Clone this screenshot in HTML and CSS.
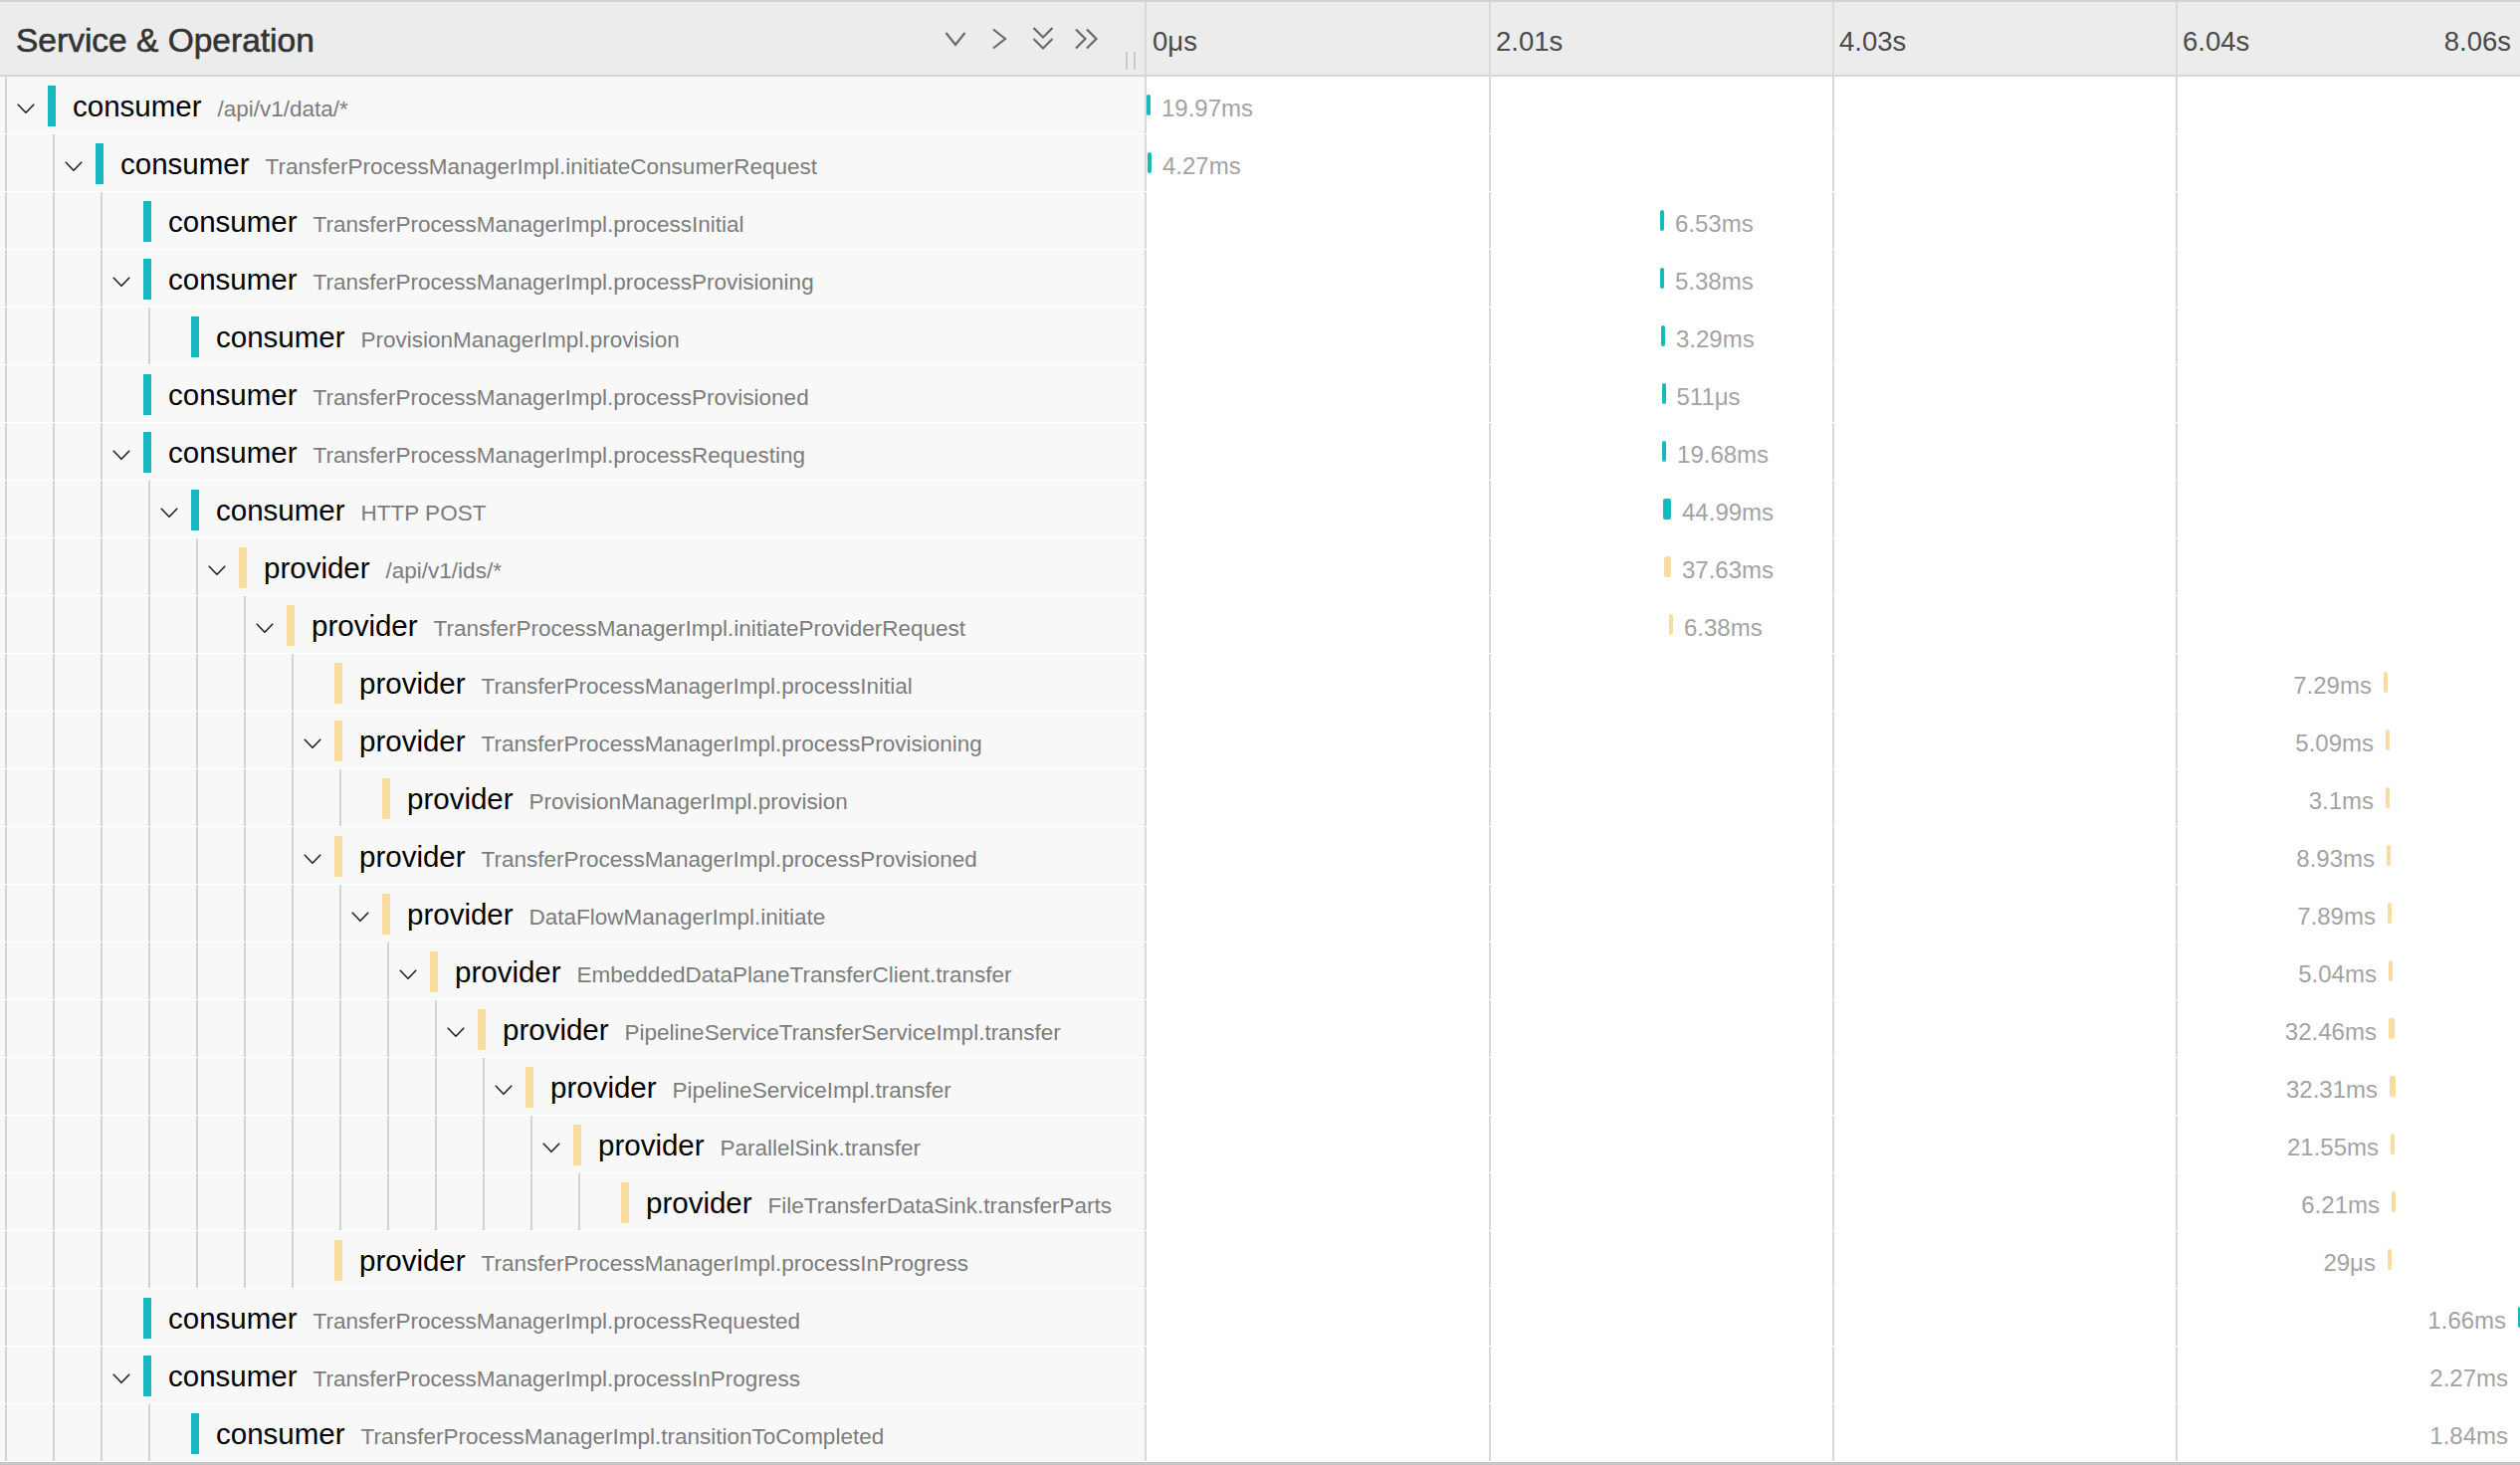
FILE: index.html
```html
<!DOCTYPE html>
<html lang="en">
<head>
<meta charset="utf-8">
<title>Trace timeline</title>
<link rel="stylesheet" href="styles.css">
</head>
<body>
<div class="trace">
  <div class="hdr">
    <div class="hdr-left">
      <span class="title">Service &amp; Operation</span>
      <div class="tools">
        <svg class="ic" viewBox="-14 -14 28 28"><polyline points="-9.5,-6 0,6 9.5,-6"/></svg>
        <svg class="ic" viewBox="-14 -14 28 28"><polyline points="-6,-9.5 6,0 -6,9.5"/></svg>
        <svg class="ic" viewBox="-14 -14 28 28"><polyline points="-9.5,-11 0,-1.5 9.5,-11"/><polyline points="-9.5,0 0,9.5 9.5,0"/></svg>
        <svg class="ic" viewBox="-14 -14 28 28"><polyline points="-11,-9.5 -1.5,0 -11,9.5"/><polyline points="0,-9.5 9.5,0 0,9.5"/></svg>
      </div>
      <span class="grip"></span>
    </div>
    <div class="hdr-ticks ticks">
      <span class="tick">0μs</span>
      <span class="tick">2.01s</span>
      <span class="tick">4.03s</span>
      <span class="tick last"><span>6.04s</span><span>8.06s</span></span>
    </div>
  </div>

  <div class="row">
    <div class="name"><span class="ind"><svg viewBox="0 0 18 10"><polyline points="0.8,0.8 9,9.2 17.2,0.8"/></svg></span><span class="sbar c"></span><span class="txt">consumer<span class="op">/api/v1/data/*</span></span></div>
    <div class="tl ticks"><span class="sb c" style="left:0%"><span class="lb">19.97ms</span></span></div>
  </div>
  <div class="row">
    <div class="name"><span class="ind"></span><span class="ind"><svg viewBox="0 0 18 10"><polyline points="0.8,0.8 9,9.2 17.2,0.8"/></svg></span><span class="sbar c"></span><span class="txt">consumer<span class="op">TransferProcessManagerImpl.initiateConsumerRequest</span></span></div>
    <div class="tl ticks"><span class="sb c" style="left:0.07%"><span class="lb">4.27ms</span></span></div>
  </div>
  <div class="row">
    <div class="name"><span class="ind"></span><span class="ind"></span><span class="ind"></span><span class="sbar c"></span><span class="txt">consumer<span class="op">TransferProcessManagerImpl.processInitial</span></span></div>
    <div class="tl ticks"><span class="sb c" style="left:37.39%"><span class="lb">6.53ms</span></span></div>
  </div>
  <div class="row">
    <div class="name"><span class="ind"></span><span class="ind"></span><span class="ind"><svg viewBox="0 0 18 10"><polyline points="0.8,0.8 9,9.2 17.2,0.8"/></svg></span><span class="sbar c"></span><span class="txt">consumer<span class="op">TransferProcessManagerImpl.processProvisioning</span></span></div>
    <div class="tl ticks"><span class="sb c" style="left:37.39%"><span class="lb">5.38ms</span></span></div>
  </div>
  <div class="row">
    <div class="name"><span class="ind"></span><span class="ind"></span><span class="ind"></span><span class="ind"></span><span class="sbar c"></span><span class="txt">consumer<span class="op">ProvisionManagerImpl.provision</span></span></div>
    <div class="tl ticks"><span class="sb c" style="left:37.46%"><span class="lb">3.29ms</span></span></div>
  </div>
  <div class="row">
    <div class="name"><span class="ind"></span><span class="ind"></span><span class="ind"></span><span class="sbar c"></span><span class="txt">consumer<span class="op">TransferProcessManagerImpl.processProvisioned</span></span></div>
    <div class="tl ticks"><span class="sb c" style="left:37.5%"><span class="lb">511μs</span></span></div>
  </div>
  <div class="row">
    <div class="name"><span class="ind"></span><span class="ind"></span><span class="ind"><svg viewBox="0 0 18 10"><polyline points="0.8,0.8 9,9.2 17.2,0.8"/></svg></span><span class="sbar c"></span><span class="txt">consumer<span class="op">TransferProcessManagerImpl.processRequesting</span></span></div>
    <div class="tl ticks"><span class="sb c" style="left:37.54%"><span class="lb">19.68ms</span></span></div>
  </div>
  <div class="row">
    <div class="name"><span class="ind"></span><span class="ind"></span><span class="ind"></span><span class="ind"><svg viewBox="0 0 18 10"><polyline points="0.8,0.8 9,9.2 17.2,0.8"/></svg></span><span class="sbar c"></span><span class="txt">consumer<span class="op">HTTP POST</span></span></div>
    <div class="tl ticks"><span class="sb c" style="left:37.61%;width:8px"><span class="lb">44.99ms</span></span></div>
  </div>
  <div class="row">
    <div class="name"><span class="ind"></span><span class="ind"></span><span class="ind"></span><span class="ind"></span><span class="ind"><svg viewBox="0 0 18 10"><polyline points="0.8,0.8 9,9.2 17.2,0.8"/></svg></span><span class="sbar p"></span><span class="txt">provider<span class="op">/api/v1/ids/*</span></span></div>
    <div class="tl ticks"><span class="sb p" style="left:37.68%;width:7px"><span class="lb">37.63ms</span></span></div>
  </div>
  <div class="row">
    <div class="name"><span class="ind"></span><span class="ind"></span><span class="ind"></span><span class="ind"></span><span class="ind"></span><span class="ind"><svg viewBox="0 0 18 10"><polyline points="0.8,0.8 9,9.2 17.2,0.8"/></svg></span><span class="sbar p"></span><span class="txt">provider<span class="op">TransferProcessManagerImpl.initiateProviderRequest</span></span></div>
    <div class="tl ticks"><span class="sb p" style="left:38.04%"><span class="lb">6.38ms</span></span></div>
  </div>
  <div class="row">
    <div class="name"><span class="ind"></span><span class="ind"></span><span class="ind"></span><span class="ind"></span><span class="ind"></span><span class="ind"></span><span class="ind"></span><span class="sbar p"></span><span class="txt">provider<span class="op">TransferProcessManagerImpl.processInitial</span></span></div>
    <div class="tl ticks"><span class="sb p rl" style="left:90.07%"><span class="lb">7.29ms</span></span></div>
  </div>
  <div class="row">
    <div class="name"><span class="ind"></span><span class="ind"></span><span class="ind"></span><span class="ind"></span><span class="ind"></span><span class="ind"></span><span class="ind"><svg viewBox="0 0 18 10"><polyline points="0.8,0.8 9,9.2 17.2,0.8"/></svg></span><span class="sbar p"></span><span class="txt">provider<span class="op">TransferProcessManagerImpl.processProvisioning</span></span></div>
    <div class="tl ticks"><span class="sb p rl" style="left:90.22%"><span class="lb">5.09ms</span></span></div>
  </div>
  <div class="row">
    <div class="name"><span class="ind"></span><span class="ind"></span><span class="ind"></span><span class="ind"></span><span class="ind"></span><span class="ind"></span><span class="ind"></span><span class="ind"></span><span class="sbar p"></span><span class="txt">provider<span class="op">ProvisionManagerImpl.provision</span></span></div>
    <div class="tl ticks"><span class="sb p rl" style="left:90.22%"><span class="lb">3.1ms</span></span></div>
  </div>
  <div class="row">
    <div class="name"><span class="ind"></span><span class="ind"></span><span class="ind"></span><span class="ind"></span><span class="ind"></span><span class="ind"></span><span class="ind"><svg viewBox="0 0 18 10"><polyline points="0.8,0.8 9,9.2 17.2,0.8"/></svg></span><span class="sbar p"></span><span class="txt">provider<span class="op">TransferProcessManagerImpl.processProvisioned</span></span></div>
    <div class="tl ticks"><span class="sb p rl" style="left:90.29%"><span class="lb">8.93ms</span></span></div>
  </div>
  <div class="row">
    <div class="name"><span class="ind"></span><span class="ind"></span><span class="ind"></span><span class="ind"></span><span class="ind"></span><span class="ind"></span><span class="ind"></span><span class="ind"><svg viewBox="0 0 18 10"><polyline points="0.8,0.8 9,9.2 17.2,0.8"/></svg></span><span class="sbar p"></span><span class="txt">provider<span class="op">DataFlowManagerImpl.initiate</span></span></div>
    <div class="tl ticks"><span class="sb p rl" style="left:90.36%"><span class="lb">7.89ms</span></span></div>
  </div>
  <div class="row">
    <div class="name"><span class="ind"></span><span class="ind"></span><span class="ind"></span><span class="ind"></span><span class="ind"></span><span class="ind"></span><span class="ind"></span><span class="ind"></span><span class="ind"><svg viewBox="0 0 18 10"><polyline points="0.8,0.8 9,9.2 17.2,0.8"/></svg></span><span class="sbar p"></span><span class="txt">provider<span class="op">EmbeddedDataPlaneTransferClient.transfer</span></span></div>
    <div class="tl ticks"><span class="sb p rl" style="left:90.43%"><span class="lb">5.04ms</span></span></div>
  </div>
  <div class="row">
    <div class="name"><span class="ind"></span><span class="ind"></span><span class="ind"></span><span class="ind"></span><span class="ind"></span><span class="ind"></span><span class="ind"></span><span class="ind"></span><span class="ind"></span><span class="ind"><svg viewBox="0 0 18 10"><polyline points="0.8,0.8 9,9.2 17.2,0.8"/></svg></span><span class="sbar p"></span><span class="txt">provider<span class="op">PipelineServiceTransferServiceImpl.transfer</span></span></div>
    <div class="tl ticks"><span class="sb p rl" style="left:90.43%;width:6px"><span class="lb">32.46ms</span></span></div>
  </div>
  <div class="row">
    <div class="name"><span class="ind"></span><span class="ind"></span><span class="ind"></span><span class="ind"></span><span class="ind"></span><span class="ind"></span><span class="ind"></span><span class="ind"></span><span class="ind"></span><span class="ind"></span><span class="ind"><svg viewBox="0 0 18 10"><polyline points="0.8,0.8 9,9.2 17.2,0.8"/></svg></span><span class="sbar p"></span><span class="txt">provider<span class="op">PipelineServiceImpl.transfer</span></span></div>
    <div class="tl ticks"><span class="sb p rl" style="left:90.51%;width:6px"><span class="lb">32.31ms</span></span></div>
  </div>
  <div class="row">
    <div class="name"><span class="ind"></span><span class="ind"></span><span class="ind"></span><span class="ind"></span><span class="ind"></span><span class="ind"></span><span class="ind"></span><span class="ind"></span><span class="ind"></span><span class="ind"></span><span class="ind"></span><span class="ind"><svg viewBox="0 0 18 10"><polyline points="0.8,0.8 9,9.2 17.2,0.8"/></svg></span><span class="sbar p"></span><span class="txt">provider<span class="op">ParallelSink.transfer</span></span></div>
    <div class="tl ticks"><span class="sb p rl" style="left:90.58%"><span class="lb">21.55ms</span></span></div>
  </div>
  <div class="row">
    <div class="name"><span class="ind"></span><span class="ind"></span><span class="ind"></span><span class="ind"></span><span class="ind"></span><span class="ind"></span><span class="ind"></span><span class="ind"></span><span class="ind"></span><span class="ind"></span><span class="ind"></span><span class="ind"></span><span class="ind"></span><span class="sbar p"></span><span class="txt">provider<span class="op">FileTransferDataSink.transferParts</span></span></div>
    <div class="tl ticks"><span class="sb p rl" style="left:90.65%"><span class="lb">6.21ms</span></span></div>
  </div>
  <div class="row">
    <div class="name"><span class="ind"></span><span class="ind"></span><span class="ind"></span><span class="ind"></span><span class="ind"></span><span class="ind"></span><span class="ind"></span><span class="sbar p"></span><span class="txt">provider<span class="op">TransferProcessManagerImpl.processInProgress</span></span></div>
    <div class="tl ticks"><span class="sb p rl" style="left:90.36%"><span class="lb">29μs</span></span></div>
  </div>
  <div class="row">
    <div class="name"><span class="ind"></span><span class="ind"></span><span class="ind"></span><span class="sbar c"></span><span class="txt">consumer<span class="op">TransferProcessManagerImpl.processRequested</span></span></div>
    <div class="tl ticks"><span class="sb c rl" style="left:99.86%"><span class="lb">1.66ms</span></span></div>
  </div>
  <div class="row">
    <div class="name"><span class="ind"></span><span class="ind"></span><span class="ind"><svg viewBox="0 0 18 10"><polyline points="0.8,0.8 9,9.2 17.2,0.8"/></svg></span><span class="sbar c"></span><span class="txt">consumer<span class="op">TransferProcessManagerImpl.processInProgress</span></span></div>
    <div class="tl ticks"><span class="sb c rl" style="left:100%"><span class="lb">2.27ms</span></span></div>
  </div>
  <div class="row">
    <div class="name"><span class="ind"></span><span class="ind"></span><span class="ind"></span><span class="ind"></span><span class="sbar c"></span><span class="txt">consumer<span class="op">TransferProcessManagerImpl.transitionToCompleted</span></span></div>
    <div class="tl ticks"><span class="sb c rl" style="left:100%"><span class="lb">1.84ms</span></span></div>
  </div>
  <div class="foot"></div>
</div>
</body>
</html>
```

FILE: styles.css
```css
* { box-sizing: border-box; }
html, body { margin: 0; padding: 0; background: #fff; }
body {
  width: 2532px;
  height: 1472px;
  overflow: hidden;
  font-family: "Liberation Sans", Arial, Helvetica, sans-serif;
}

.ticks {
  background-image: linear-gradient(90deg,
    transparent calc(25% - 1px), #d9d9d9 0, #d9d9d9 calc(25% + 1px),
    transparent 0, transparent calc(50% - 1px), #d9d9d9 0, #d9d9d9 calc(50% + 1px),
    transparent 0, transparent calc(75% - 1px), #d9d9d9 0, #d9d9d9 calc(75% + 1px),
    transparent 0);
}

/* header */
.hdr {
  display: flex;
  height: 77px;
  border-top: 2px solid #d2d2d2;
  border-bottom: 2px solid #d6d6d6;
  background-color: #ececec;
}
.hdr-left {
  width: 1152px;
  flex: none;
  display: flex;
  align-items: center;
  padding-left: 16px;
  border-right: 2px solid #d8d8d8;
}
.title {
  font-size: 33.5px;
  color: #333;
  -webkit-text-stroke: 0.6px #333;
  padding-top: 4px;
  white-space: nowrap;
}
.tools {
  margin-left: auto;
  display: flex;
  align-items: center;
  gap: 16px;
}
.ic {
  width: 28px;
  height: 28px;
  fill: none;
  stroke: #6a6a6a;
  stroke-width: 2.2;
}
.grip {
  align-self: flex-end;
  width: 10px;
  height: 18px;
  margin: 0 9px 5px 25.5px;
  border-left: 2px solid #cacaca;
  border-right: 2px solid #cacaca;
}
.hdr-ticks {
  flex: 1;
  display: grid;
  grid-template-columns: repeat(4, 1fr);
}
.tick {
  display: flex;
  align-items: center;
  padding: 6px 0 0 6px;
  font-size: 27.5px;
  color: #4a4a4a;
  white-space: nowrap;
}
.tick.last {
  justify-content: space-between;
  padding-right: 9px;
}

/* rows */
.row {
  display: flex;
  height: 58px;
  border-bottom: 1px solid #fff;
}
.name {
  width: 1152px;
  flex: none;
  display: flex;
  align-items: center;
  background: #f8f8f8;
  border-right: 2px solid #d8d8d8;
  overflow: hidden;
  white-space: nowrap;
}
.ind {
  width: 48px;
  flex: none;
  align-self: stretch;
  display: flex;
  align-items: center;
  padding-left: 17px;
  background: linear-gradient(#d3d3d3, #d3d3d3) 5px 0 / 2px 100% no-repeat;
}
.ind svg {
  width: 18px;
  height: 10px;
  margin-top: 6px;
  fill: none;
  stroke: #222;
  stroke-width: 1.6;
}
.sbar {
  width: 8px;
  height: 41px;
  flex: none;
  margin-top: 2px;
}
.c { background-color: #17b8be; }
.p { background-color: #f8dca1; }
.txt {
  margin-left: 17px;
  margin-top: 3px;
  font-size: 29.5px;
  color: #000;
}
.op {
  margin-left: 16px;
  font-size: 22.5px;
  color: #7c7c7c;
}

/* timeline */
.tl {
  flex: 1;
  position: relative;
  overflow: hidden;
}
.sb {
  position: absolute;
  top: 18px;
  width: 4px;
  height: 21px;
  border-radius: 2px;
}
.lb {
  position: absolute;
  top: calc(50% + 3.5px);
  left: 100%;
  margin-left: 11px;
  transform: translateY(-50%);
  font-size: 24px;
  line-height: 1;
  color: #a3a3a3;
  white-space: nowrap;
}
.sb.rl .lb {
  left: auto;
  right: 100%;
  margin-left: 0;
  margin-right: 12px;
}
.foot {
  height: 3px;
  background: #c6c6c6;
}
```
